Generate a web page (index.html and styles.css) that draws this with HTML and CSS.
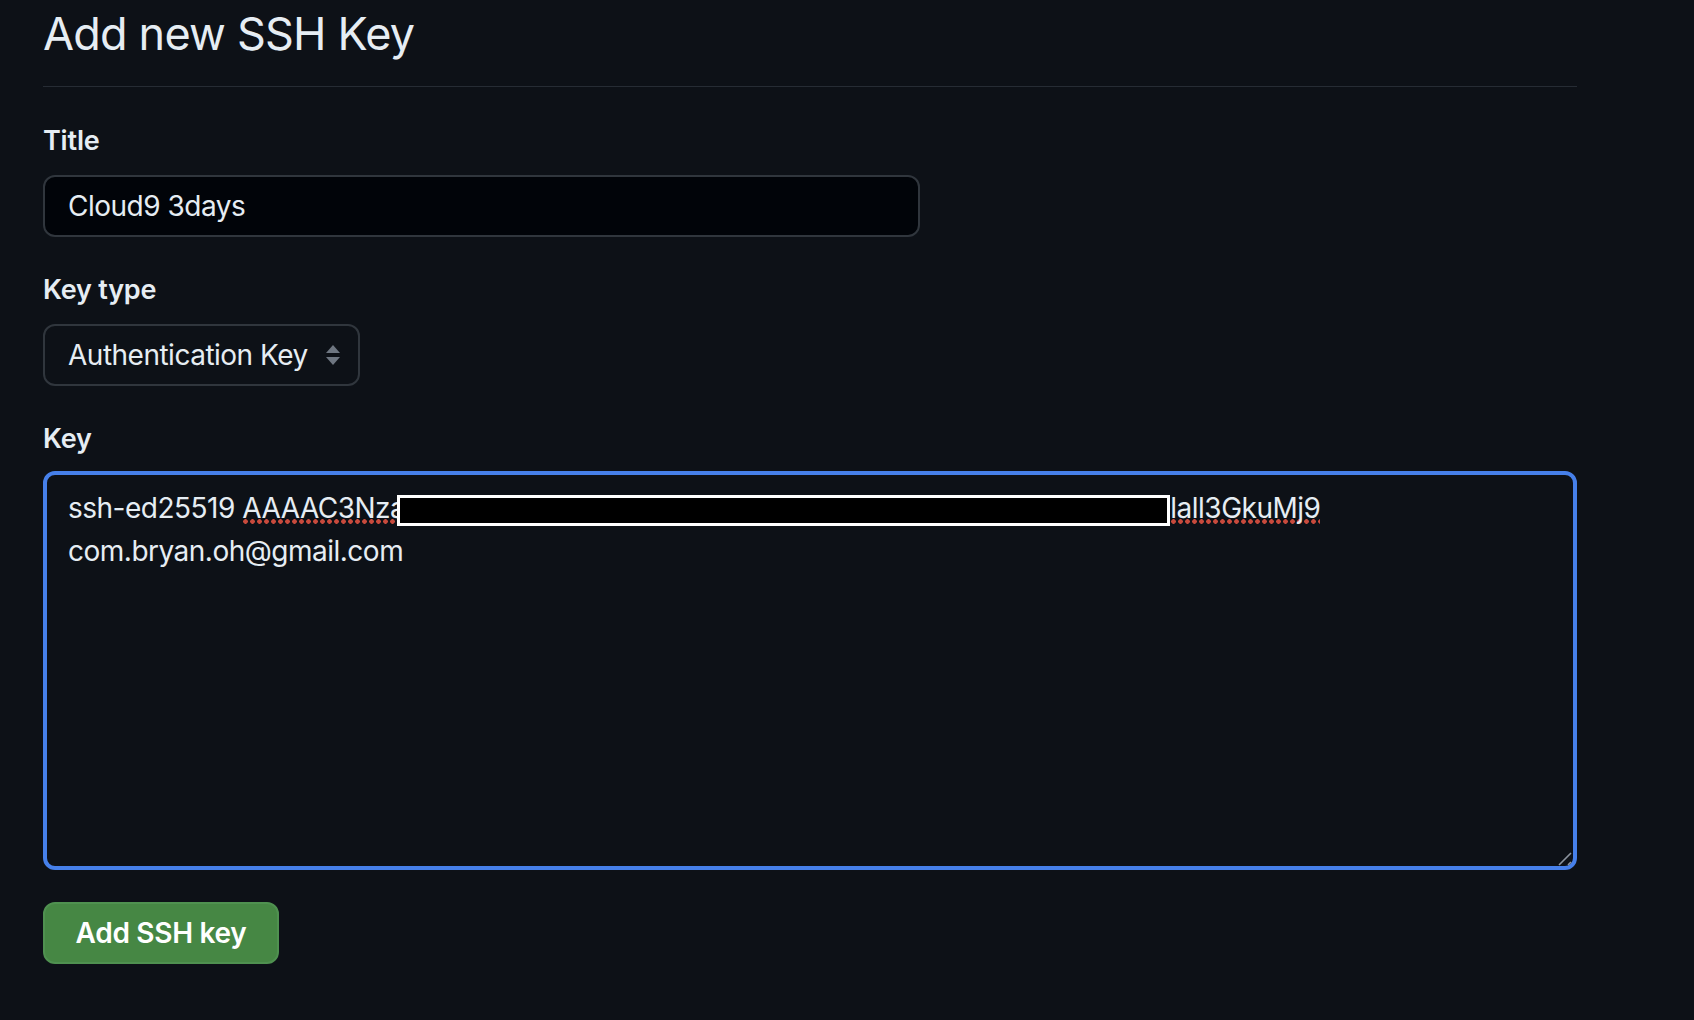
FILE: index.html
```html
<!DOCTYPE html>
<html lang="en">
<head>
<meta charset="utf-8">
<title>Add new SSH Key</title>
<link rel="stylesheet" href="styles.css">
</head>
<body>
<main class="page">
  <h1 class="page-title">Add new SSH Key</h1>
  <form class="form">
    <div class="field">
      <label class="field-label">Title</label>
      <div class="text-input">Cloud9 3days</div>
    </div>
    <div class="field">
      <label class="field-label">Key type</label>
      <div class="select">
        <span class="select-value">Authentication Key</span>
        <svg class="select-arrows" width="16" height="20" viewBox="0 0 16 20"><path d="M8 0 L15 8 H1 Z M8 20 L15 12 H1 Z" fill="#6e7681"/></svg>
      </div>
    </div>
    <div class="field">
      <label class="field-label field-label-tight">Key</label>
      <div class="textarea">
        <div class="key-text">ssh-ed25519 <span class="misspelled">AAAAC3Nza</span><span class="redacted"></span><span class="misspelled">lall3GkuMj9</span><br>com.bryan.oh@gmail.com</div>
        <svg class="resize-handle" width="16" height="16" viewBox="0 0 16 16"><path d="M2 15 L14 3 M11 15 L14 12" stroke="#8b949e" stroke-width="1.6" fill="none"/></svg>
      </div>
    </div>
    <div class="actions">
      <button type="button" class="btn-primary">Add SSH key</button>
    </div>
  </form>
</main>
</body>
</html>
```

FILE: styles.css
```css
* { box-sizing: border-box; }

html, body {
  margin: 0;
  background: #0d1117;
}

body {
  font-family: Inter, "Noto Sans", "Liberation Sans", sans-serif;
  color: #e6edf3;
}

.page {
  width: 1577px;
  padding: 4px 0 0 43px;
}

.page-title {
  margin: 0;
  font-size: 45px;
  font-weight: 400;
  line-height: 60px;
  padding-bottom: 22px;
  border-bottom: 1px solid #262c34;
  letter-spacing: -0.8px;
}

.form {
  padding-top: 34px;
}

.field + .field {
  margin-top: 33px;
}

.field-label {
  display: block;
  font-size: 27px;
  font-weight: 600;
  line-height: 40px;
  margin-bottom: 14px;
  letter-spacing: -0.2px;
}

.field-label-tight {
  margin-bottom: 12px;
}

.text-input {
  width: 877px;
  height: 62px;
  display: flex;
  align-items: center;
  padding: 0 23px;
  background: #010409;
  border: 2px solid #30363d;
  border-radius: 12px;
  font-size: 28px;
  letter-spacing: -0.5px;
}

.select {
  width: 317px;
  height: 62px;
  display: flex;
  align-items: center;
  justify-content: space-between;
  padding: 0 17px 0 23px;
  border: 2px solid #30363d;
  border-radius: 12px;
  font-size: 28px;
  letter-spacing: -0.5px;
  white-space: nowrap;
}

.select-arrows {
  display: block;
  flex: none;
}

.textarea {
  position: relative;
  height: 399px;
  border: 4px solid #4680ea;
  border-radius: 12px;
  padding: 12px 21px;
}

.key-text {
  font-size: 28px;
  line-height: 43px;
  letter-spacing: -0.5px;
}

.misspelled {
  background-image: radial-gradient(circle, #c84a3c 2px, transparent 2.6px);
  background-repeat: repeat-x;
  background-size: 7px 7px;
  background-position: 0 100%;
}

.redacted {
  display: inline-block;
  vertical-align: -8px;
  width: 773px;
  height: 31px;
  margin-left: -8px;
  background: #000;
  border: 3px solid #fff;
}

.resize-handle {
  position: absolute;
  right: 0;
  bottom: 0;
}

.actions {
  margin-top: 32px;
}

.btn-primary {
  width: 236px;
  height: 62px;
  background: #468744;
  border: 2px solid #4f9150;
  border-radius: 12px;
  color: #ffffff;
  font-family: inherit;
  font-size: 28px;
  font-weight: 600;
  letter-spacing: -0.3px;
  padding: 0;
}
```
